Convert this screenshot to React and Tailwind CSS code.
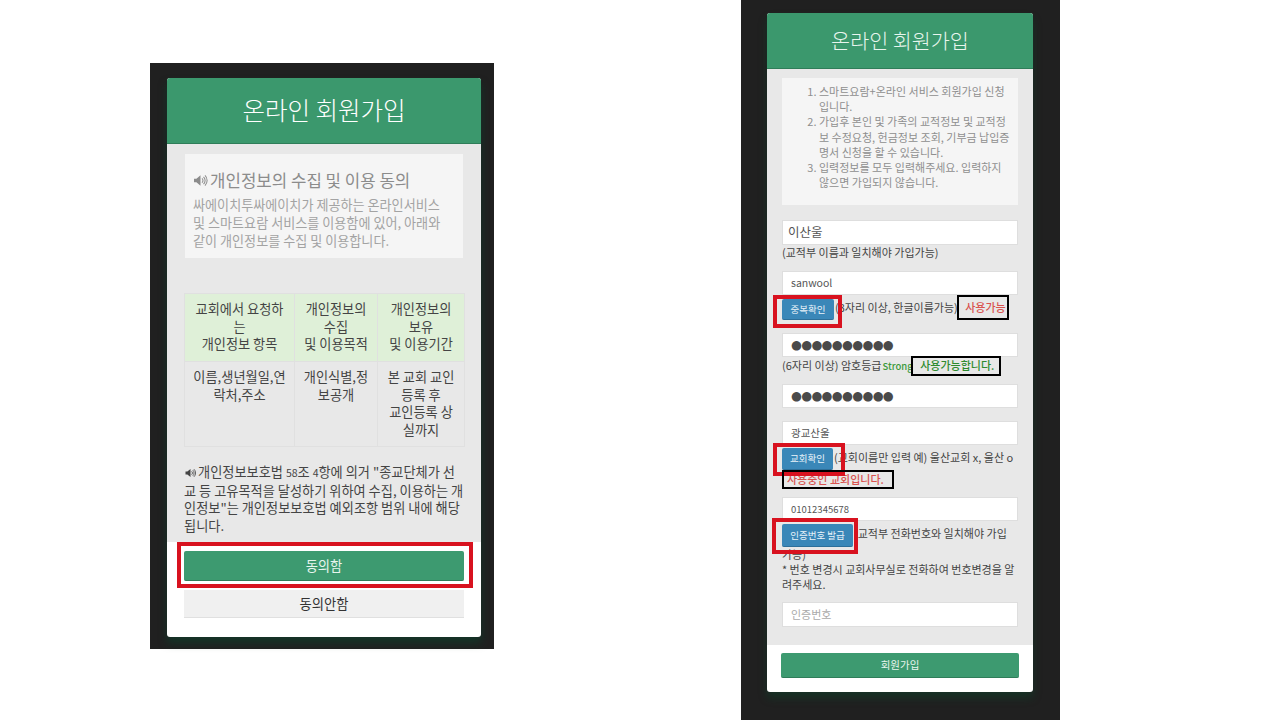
const FONT = "font-['Noto_Sans_CJK_KR','Noto_Sans',sans-serif]";

function Speaker({ className }) {
  return (
    <svg viewBox="0 0 16 14" className={className} aria-hidden="true">
      <path d="M1 5h2.6L8 1.4v11.2L3.6 9H1z" fill="currentColor" />
      <path d="M9.6 4.6a3.2 3.2 0 0 1 0 4.8M11.2 3a5.4 5.4 0 0 1 0 8M12.8 1.6a7.4 7.4 0 0 1 0 10.8" fill="none" stroke="currentColor" strokeWidth="1.1" />
    </svg>
  );
}

function Mark({ className, red }) {
  return <div className={`absolute pointer-events-none ${red ? "border-4 border-[#d8121f]" : "border-[2.5px] border-black"} ${className}`} />;
}

function Field({ value, className = "", textClass = "text-[10.5px] pl-2", dots }) {
  return (
    <div className={`bg-white border border-[#dedede] flex items-center ${className}`}>
      {dots ? (
        <span className="text-[#4a4a4a] text-[12.5px] tracking-[-0.7px] font-['DejaVu_Sans',sans-serif] pl-[8px]">{"●●●●●●●●●●"}</span>
      ) : (
        <span className={`${textClass} text-[#555]`}>{value}</span>
      )}
    </div>
  );
}

function Blue({ children, className = "" }) {
  return (
    <span className={`inline-flex items-center justify-center align-middle bg-[#3a87b8] border-b border-[#2d6f99] rounded-[2px] text-[#eaf4fa] text-[9.5px] ${className}`}>
      {children}
    </span>
  );
}

function LeftPhone() {
  const th = "border border-[#e0e0e0] bg-[#dff0d8] px-2 py-[6px] text-center font-normal align-top";
  const td = "border border-[#e0e0e0] px-2 py-[6px] text-center align-top";
  return (
    <div className="w-[344px] h-[586px] mt-[63px] ml-[150px] shrink-0 bg-[#202020] pt-[15px] pl-[17px]">
      <div className="w-[314px] h-[559px] bg-white rounded-[3px] overflow-hidden flex flex-col shadow-[0_6px_8px_rgba(10,70,45,0.55)]">
        <div className="h-[66px] shrink-0 bg-[#3b986d] border-b border-[#2f7d59] flex items-center justify-center text-white text-[24.5px] font-light pb-[1px]">
          온라인 회원가입
        </div>
        <div className="h-[398px] shrink-0 bg-[#e8e8e8] pt-[10px] px-[17px] text-[#444] text-[13.2px] leading-[17.5px]">
          <div className="mx-[1px] h-[104px] bg-[#f5f5f5] pt-[15px] pl-2 pr-[14px] text-[#a3a3a3] text-[13.1px] leading-[18px]">
            <div className="flex items-center gap-[2px] text-[#8c8c8c] text-[16.8px] leading-[22px] mb-[5px]">
              <Speaker className="w-[15px] h-[13px] text-[#8c8c8c]" />
              <span>개인정보의 수집 및 이용 동의</span>
            </div>
            싸에이치투싸에이치가 제공하는 온라인서비스 및 스마트요람 서비스를 이용함에 있어, 아래와 같이 개인정보를 수집 및 이용합니다.
          </div>
          <table className="mt-[35px] w-[280px] table-fixed border-collapse">
            <colgroup>
              <col className="w-[110px]" />
              <col className="w-[83px]" />
              <col className="w-[87px]" />
            </colgroup>
            <thead>
              <tr className="h-[68px]">
                <th className={th}>교회에서 요청하는<br />개인정보 항목</th>
                <th className={th}>개인정보의 수집<br />및 이용목적</th>
                <th className={th}>개인정보의 보유<br />및 이용기간</th>
              </tr>
            </thead>
            <tbody>
              <tr className="h-[85px]">
                <td className={td}>이름,생년월일,연락처,주소</td>
                <td className={td}>개인식별,정보공개</td>
                <td className={td}>본 교회 교인등록 후<br />교인등록 상실까지</td>
              </tr>
            </tbody>
          </table>
          <p className="mt-[16px] w-[280px]">
            <Speaker className="inline w-[13px] h-[10px] align-[-0.5px] mr-[1px] text-[#444]" />
            개인정보보호법 <span className="text-[10.5px]">58</span>조 <span className="text-[10.5px]">4</span>항에 의거 "종교단체가 선교 등 고유목적을 달성하기 위하여 수집, 이용하는 개인정보"는 개인정보보호법 예외조항 범위 내에 해당됩니다.
          </p>
        </div>
        <div className="px-[17px] pt-[9px]">
          <div className="h-[30px] bg-[#3d9a70] border-b border-[#2f7d59] rounded-[2px] flex items-center justify-center text-[#e8f5ee] text-[13.3px]">동의함</div>
          <div className="mt-[9px] h-[28px] bg-[#f0f0f0] border-b border-[#e0e0e0] flex items-center justify-center text-[#333] text-[13.3px]">동의안함</div>
        </div>
      </div>
    </div>
  );
}

function RightPhone() {
  const help = "text-[11px] leading-[15px] text-[#444]";
  return (
    <div className="w-[319px] h-[720px] ml-[247px] shrink-0 bg-[#202020] pt-[13px] pl-[26px]">
      <div className="w-[266px] h-[679px] bg-white rounded-[3px] overflow-hidden flex flex-col shadow-[0_6px_8px_rgba(10,70,45,0.45)]">
        <div className="h-[56px] shrink-0 bg-[#3b986d] border-b border-[#2f7d59] flex items-center justify-center text-[#e8f5ee] text-[20.7px] font-light">
          온라인 회원가입
        </div>
        <div className="h-[576px] shrink-0 bg-[#e8e8e8] pt-[9px] pl-[15px] pr-[15px]">
          <div className="h-[127px] bg-[#f5f5f5] pt-[6px] pl-[21px] pr-[6px] text-[#8f8f8f] text-[11px] leading-[15.2px]">
            <ol className="list-decimal pl-[16px]">
              <li>스마트요람+온라인 서비스 회원가입 신청입니다.</li>
              <li>가입후 본인 및 가족의 교적정보 및 교적정보 수정요청, 헌금정보 조회, 기부금 납입증명서 신청을 할 수 있습니다.</li>
              <li>입력정보를 모두 입력해주세요. 입력하지 않으면 가입되지 않습니다.</li>
            </ol>
          </div>
          <Field value="이산울" className="mt-[15px] h-[25px]" textClass="text-[12.5px] pl-[5px]" />
          <div className={`${help} h-[26px]`}>(교적부 이름과 일치해야 가입가능)</div>
          <Field value="sanwool" className="h-[24px]" />
          <div className={`${help} h-[38px] pt-[4px]`}>
            <Blue className="w-[52px] h-[21px] mr-[1px]">중복확인</Blue>(3자리 이상, 한글이름가능) <span className="ml-[5px] text-[#d9534f] font-medium">사용가능</span>
          </div>
          <Field dots className="h-[24px]" />
          <div className={`${help} h-[27px] pt-[1px]`}>
            (6자리 이상) 암호등급<span className="ml-[1px] text-[#3c9a3c] text-[9.5px] font-medium">Strong</span> <span className="ml-[5px] text-[#2e8b2e] font-medium">사용가능합니다.</span>
          </div>
          <Field dots className="h-[24px]" />
          <Field value="광교산울" className="mt-[13px] h-[24px]" />
          <div className={`${help} h-[52px] pt-[3px]`}>
            <Blue className="w-[51px] h-[22px] mr-[1px]">교회확인</Blue>(교회이름만 입력 예) 울산교회 x, 울산 o
            <div className="mt-[2px] ml-[5px] text-[#d9534f] font-medium">사용중인 교회입니다.</div>
          </div>
          <Field value="01012345678" className="h-[24px]" textClass="text-[9.5px] pl-2" />
          <div className={`${help} h-[81px] pt-[3px]`}>
            <Blue className="w-[71px] h-[23px] mr-[1px]">인증번호 발급</Blue>(교적부 전화번호와 일치해야 가입
            <br />가능)
            <br />* 번호 변경시 교회사무실로 전화하여 번호변경을 알려주세요.
          </div>
          <div className="h-[25px] bg-white border border-[#dedede] flex items-center pl-2 text-[11px] text-[#aaa]">인증번호</div>
        </div>
        <div className="px-[14px] pt-[8px]">
          <div className="h-[25px] bg-[#3d9a70] border-b border-[#2f7d59] rounded-[2px] flex items-center justify-center text-[#e8f5ee] text-[10.5px]">회원가입</div>
        </div>
      </div>
    </div>
  );
}

export default function App() {
  return (
    <div className={`relative w-[1280px] h-[720px] overflow-hidden bg-white flex items-start ${FONT}`}>
      <LeftPhone />
      <RightPhone />
      <Mark red className="left-[177px] top-[542px] w-[296px] h-[46px]" />
      <Mark red className="left-[773px] top-[295px] w-[69px] h-[33px]" />
      <Mark red className="left-[773px] top-[443px] w-[72px] h-[33px]" />
      <Mark red className="left-[772px] top-[518px] w-[86px] h-[36px]" />
      <Mark className="left-[957px] top-[295px] w-[52px] h-[25px]" />
      <Mark className="left-[911px] top-[356px] w-[90px] h-[20px]" />
      <Mark className="left-[782px] top-[470px] w-[112px] h-[19px]" />
    </div>
  );
}
